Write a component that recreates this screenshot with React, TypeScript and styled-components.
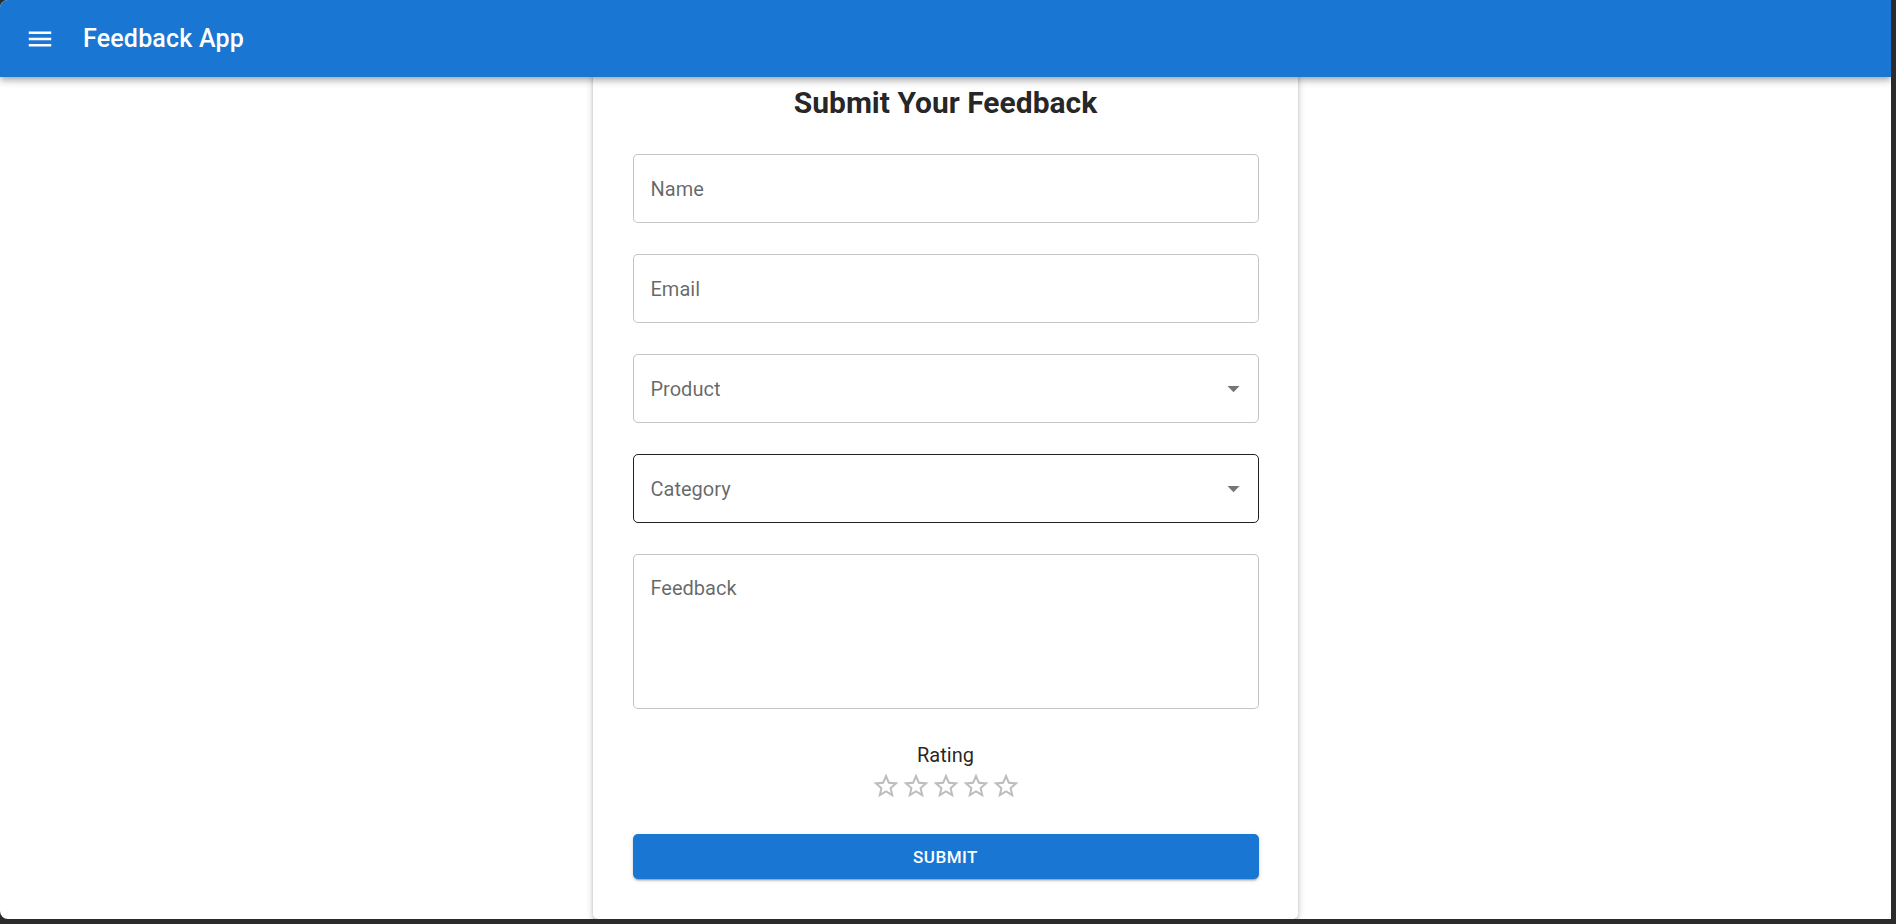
import React from "react";
import styled, { createGlobalStyle } from "styled-components";

const GlobalStyle = createGlobalStyle`
  html, body {
    margin: 0;
    padding: 0;
    background: #2b2b2b;
    font-family: Roboto, "Liberation Sans", Arial, sans-serif;
    overflow: hidden;
  }
  * { box-sizing: border-box; }
`;

const Window = styled.div`
  position: relative;
  width: 1891px;
  height: 919px;
  background: #ffffff;
  border-radius: 8px 0 0 8px;
  overflow: hidden;
`;

const AppBar = styled.header`
  position: absolute;
  top: 0;
  left: 0;
  right: 0;
  z-index: 10;
  height: 77px;
  background: #1976d2;
  color: #ffffff;
  display: flex;
  align-items: center;
  padding: 0 28px 0 13px;
  box-shadow: 0px 2px 5px -1px rgba(0, 0, 0, 0.2),
    0px 5px 6px 0px rgba(0, 0, 0, 0.14), 0px 1px 12px 0px rgba(0, 0, 0, 0.12);
`;

const MenuButton = styled.button`
  display: flex;
  align-items: center;
  justify-content: center;
  padding: 12px;
  margin: 0 16px 0 0;
  border: none;
  background: transparent;
  color: #ffffff;
  border-radius: 50%;
  cursor: pointer;
  svg {
    width: 30px;
    height: 30px;
    fill: currentColor;
  }
`;

const AppTitle = styled.div`
  font-size: 25px;
  font-weight: 500;
  letter-spacing: 0.0075em;
  line-height: 1.6;
`;

const Main = styled.main`
  display: flex;
  justify-content: center;
  padding-top: 47px;
`;

const Card = styled.section`
  width: 705px;
  background: #ffffff;
  border-radius: 5px;
  padding: 38px 39.5px 40px;
  display: flex;
  flex-direction: column;
  box-shadow: 0px 3px 4px -2px rgba(0, 0, 0, 0.2),
    0px 3px 5px 0px rgba(0, 0, 0, 0.14), 0px 1px 10px 0px rgba(0, 0, 0, 0.12);
`;

const Heading = styled.h1`
  margin: 0 0 33px;
  text-align: center;
  font-size: 30px;
  line-height: 36px;
  font-weight: 700;
  color: rgba(0, 0, 0, 0.87);
`;

const Fields = styled.div`
  display: flex;
  flex-direction: column;
  gap: 31px;
`;

const TextInput = styled.input`
  width: 100%;
  height: 69px;
  margin: 0;
  padding: 0 17px;
  border: 1px solid rgba(0, 0, 0, 0.23);
  border-radius: 5px;
  font-family: inherit;
  font-size: 20px;
  color: rgba(0, 0, 0, 0.87);
  background: #ffffff;
  outline: none;
  &::placeholder {
    color: rgba(0, 0, 0, 0.6);
    opacity: 1;
  }
`;

const SelectBox = styled.div<{ $active?: boolean }>`
  width: 100%;
  height: 69px;
  display: flex;
  align-items: center;
  justify-content: space-between;
  padding: 0 10px 0 17px;
  border: 1px solid
    ${(p) => (p.$active ? "rgba(0, 0, 0, 0.87)" : "rgba(0, 0, 0, 0.23)")};
  border-radius: 5px;
  cursor: pointer;
`;

const SelectLabel = styled.span`
  font-size: 20px;
  color: rgba(0, 0, 0, 0.6);
`;

const Arrow = styled.svg`
  width: 29px;
  height: 29px;
  fill: rgba(0, 0, 0, 0.54);
`;

const TextArea = styled.textarea`
  width: 100%;
  height: 155px;
  display: block;
  margin: 0;
  padding: 19px 17px;
  border: 1px solid rgba(0, 0, 0, 0.23);
  border-radius: 5px;
  font-family: inherit;
  font-size: 20px;
  line-height: 28px;
  color: rgba(0, 0, 0, 0.87);
  resize: none;
  outline: none;
  &::placeholder {
    color: rgba(0, 0, 0, 0.6);
    opacity: 1;
  }
`;

const RatingBlock = styled.div`
  margin-top: 32px;
  display: flex;
  flex-direction: column;
  align-items: center;
`;

const RatingLabel = styled.div`
  font-size: 20px;
  line-height: 29px;
  color: rgba(0, 0, 0, 0.87);
`;

const Stars = styled.div`
  display: flex;
  margin-top: 1px;
`;

const Star = styled.svg`
  width: 30px;
  height: 30px;
  fill: rgba(0, 0, 0, 0.26);
  cursor: pointer;
`;

const SubmitButton = styled.button`
  margin-top: 33px;
  width: 100%;
  height: 45px;
  border: none;
  border-radius: 5px;
  background: #1976d2;
  color: #ffffff;
  font-family: inherit;
  font-size: 17px;
  font-weight: 500;
  letter-spacing: 0.02857em;
  text-transform: uppercase;
  cursor: pointer;
  box-shadow: 0px 3px 1px -2px rgba(0, 0, 0, 0.2),
    0px 2px 2px 0px rgba(0, 0, 0, 0.14), 0px 1px 5px 0px rgba(0, 0, 0, 0.12);
`;

const MenuIcon = () => (
  <svg viewBox="0 0 24 24" aria-hidden="true">
    <path d="M3 18h18v-2H3v2zm0-5h18v-2H3v2zm0-7v2h18V6H3z" />
  </svg>
);

const Select = ({ label, active }: { label: string; active?: boolean }) => (
  <SelectBox $active={active}>
    <SelectLabel>{label}</SelectLabel>
    <Arrow viewBox="0 0 24 24" aria-hidden="true">
      <path d="M7 10l5 5 5-5z" />
    </Arrow>
  </SelectBox>
);

const StarBorder = () => (
  <Star viewBox="0 0 24 24" aria-hidden="true">
    <path d="M22 9.24l-7.19-.62L12 2 9.19 8.63 2 9.24l5.46 4.73L5.82 21 12 17.27 18.18 21l-1.63-7.03L22 9.24zM12 15.4l-3.76 2.27 1-4.28-3.32-2.88 4.38-.38L12 6.1l1.71 4.04 4.38.38-3.32 2.88 1 4.28L12 15.4z" />
  </Star>
);

export default function App() {
  return (
    <>
      <GlobalStyle />
      <Window>
        <AppBar>
          <MenuButton aria-label="menu">
            <MenuIcon />
          </MenuButton>
          <AppTitle>Feedback App</AppTitle>
        </AppBar>
        <Main>
          <Card>
            <Heading>Submit Your Feedback</Heading>
            <Fields>
              <TextInput placeholder="Name" />
              <TextInput placeholder="Email" />
              <Select label="Product" />
              <Select label="Category" active />
              <TextArea placeholder="Feedback" />
            </Fields>
            <RatingBlock>
              <RatingLabel>Rating</RatingLabel>
              <Stars>
                {[0, 1, 2, 3, 4].map((i) => (
                  <StarBorder key={i} />
                ))}
              </Stars>
            </RatingBlock>
            <SubmitButton>Submit</SubmitButton>
          </Card>
        </Main>
      </Window>
    </>
  );
}
